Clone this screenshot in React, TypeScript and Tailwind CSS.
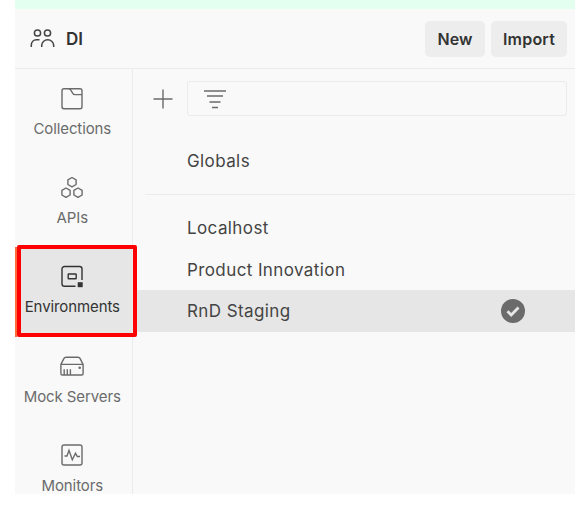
import type { ReactNode } from 'react';

const stroke = { fill: 'none', stroke: 'currentColor', strokeWidth: 1.4 } as const;

function Icon({ children, className = '' }: { children: ReactNode; className?: string }) {
  return (
    <svg width="26" height="26" viewBox="0 0 26 26" className={className} {...stroke}>
      {children}
    </svg>
  );
}

const CollectionsIcon = () => (
  <Icon>
    <rect x="3" y="2.7" width="20" height="20" rx="2" />
    <path d="M9.8 2.7c.9.1 1.500.7 2 1.500l2 3.200c.5.8 1.100 1.200 2 1.200H23" />
  </Icon>
);

const ApisIcon = () => (
  <Icon>
    <path
      d="M13 2.500l4.100 2.400v4.600L13 11.900 8.900 9.500V4.900zM7 13l4.100 2.400V20L7 22.400 2.900 20v-4.600zM19 13l4.100 2.400V20L19 22.400 14.900 20v-4.600z"
      strokeLinejoin="round"
    />
  </Icon>
);

const EnvironmentsIcon = () => (
  <Icon className="text-[#333]">
    <path d="M16.5 22.200H5.500a2.500 2.500 0 0 1-2.500-2.500V5a2.500 2.500 0 0 1 2.500-2.500h15A2.500 2.500 0 0 1 23 5v11" />
    <rect x="9.200" y="10" width="8" height="4.700" rx=".5" />
    <rect x="18.700" y="18.200" width="5" height="5" fill="currentColor" stroke="none" />
  </Icon>
);

const ServersIcon = () => (
  <Icon>
    <path d="M1.900 10.400l3.100-6q.6-1.200 2-1.200h12q1.400 0 2 1.200l3.100 6v9.300q0 1.300-1.300 1.300H3.200q-1.300 0-1.300-1.300zM1.900 10.400h22.200M5.200 21v-5.800M8.300 21v-5.800M11.400 21v-5.800" />
    <circle cx="20.700" cy="13.700" r="1.300" fill="currentColor" stroke="none" />
  </Icon>
);

const MonitorsIcon = () => (
  <Icon>
    <rect x="3" y="2" width="20" height="20" rx="2" />
    <path d="M5.500 13h2.500l2-5.700 3.300 9.500 3.200-6.500 1.800 3.200H21" />
  </Icon>
);

const sections = [
  { name: 'Collections', icon: <CollectionsIcon /> },
  { name: 'APIs', icon: <ApisIcon /> },
  { name: 'Environments', icon: <EnvironmentsIcon />, active: true },
  { name: 'Mock Servers', icon: <ServersIcon /> },
  { name: 'Monitors', icon: <MonitorsIcon /> },
];

const environments = [
  { name: 'Localhost' },
  { name: 'Product Innovation' },
  { name: 'RnD Staging', selected: true },
];

function Header() {
  return (
    <header className="flex h-[60px] shrink-0 items-center border-b border-[#ebebeb] pr-2 pl-[15px]">
      <svg width="26" height="22" viewBox="0 0 26 22" className="text-[#444]" {...stroke} strokeWidth="1.5">
        <circle cx="7.500" cy="5" r="3.100" />
        <circle cx="17.500" cy="5" r="3.100" />
        <path d="M1.300 19v-1.500c0-3.500 2.300-5.700 5.200-5.700H9.500M11.700 19v-1.500a6 5.700 0 0 1 12 0v1.500" />
      </svg>
      <span className="ml-[10px] pt-[2px] text-[17px] font-semibold text-[#333]">DI</span>
      <div className="ml-auto flex gap-[6px] text-base font-semibold text-[#333]">
        <button className="h-9 w-[60px] rounded-[5px] bg-[#ededed]">New</button>
        <button className="h-9 w-[76px] rounded-[5px] bg-[#ededed] tracking-[0.2px]">Import</button>
      </div>
    </header>
  );
}

function Sidebar() {
  return (
    <nav className="w-[118px] shrink-0 border-r border-[#ebebeb]">
      {sections.map((s) => (
        <div
          key={s.name}
          className={`relative flex h-[89.2px] flex-col items-center pt-[17px] pr-[2.4px] text-[15px] tracking-[-0.1px] whitespace-nowrap ${
            s.active ? 'bg-[#e6e6e6] text-[#333]' : 'text-[#6b6b6b]'
          }`}
        >
          {s.icon}
          <span className="mt-[7px] leading-5">{s.name}</span>
          {s.active && (
            <>
              <div className="absolute inset-y-0 left-0 w-[2px] bg-[#ff6c37]" />
              <div className="absolute -top-[2px] left-[2px] z-10 h-[92px] w-[120px] rounded-[2px] border-4 border-[#fe0000]" />
            </>
          )}
        </div>
      ))}
    </nav>
  );
}

function EnvironmentList() {
  return (
    <main className="min-w-0 flex-1 text-[17px] tracking-[0.4px] text-[#444]">
      <div className="flex items-center pt-3 pr-2 pl-5">
        <svg width="20" height="20" viewBox="0 0 20 20" className="text-[#6b6b6b]" {...stroke}>
          <path d="M.5 10h19M10 .5v19" />
        </svg>
        <div className="ml-[14px] flex h-[35px] flex-1 items-center rounded-[3px] border border-[#ebebeb] pl-4">
          <svg width="22" height="20" viewBox="0 0 22 20" className="text-[#6b6b6b]" {...stroke}>
            <path d="M0 2h22M3 7h16M5.500 13h11M8 18.500h6" />
          </svg>
        </div>
      </div>
      <div className="mt-[25px] flex h-10 items-center pt-[2px] pl-[54px]">Globals</div>
      <div className="mt-[13px] ml-3 border-t border-[#ebebeb]" />
      <div className="pt-3">
        {environments.map((e) => (
          <div
            key={e.name}
            className={`flex h-[41.5px] items-center pr-[50px] pl-[54px] ${e.selected ? 'bg-[#e6e6e6]' : ''}`}
          >
            <span className="pt-[2px]">{e.name}</span>
            {e.selected && (
              <svg width="24" height="24" viewBox="0 0 24 24" className="ml-auto">
                <circle cx="12" cy="12" r="12" fill="#6b6b6b" />
                <path d="M6.500 12.300l3.700 3.700 7.300-7.500" fill="none" stroke="#e6e6e6" strokeWidth="2.800" />
              </svg>
            )}
          </div>
        ))}
      </div>
    </main>
  );
}

export default function App() {
  return (
    <div className="h-[505px] w-[575px] overflow-hidden bg-white pl-[15px] font-['Inter','Liberation_Sans',sans-serif]">
      <div className="flex h-[494px] flex-col overflow-hidden bg-[#f9f9f9]">
        <div className="h-[9px] shrink-0 bg-[#e3fff0]" />
        <Header />
        <div className="flex min-h-0 flex-1">
          <Sidebar />
          <EnvironmentList />
        </div>
      </div>
    </div>
  );
}
